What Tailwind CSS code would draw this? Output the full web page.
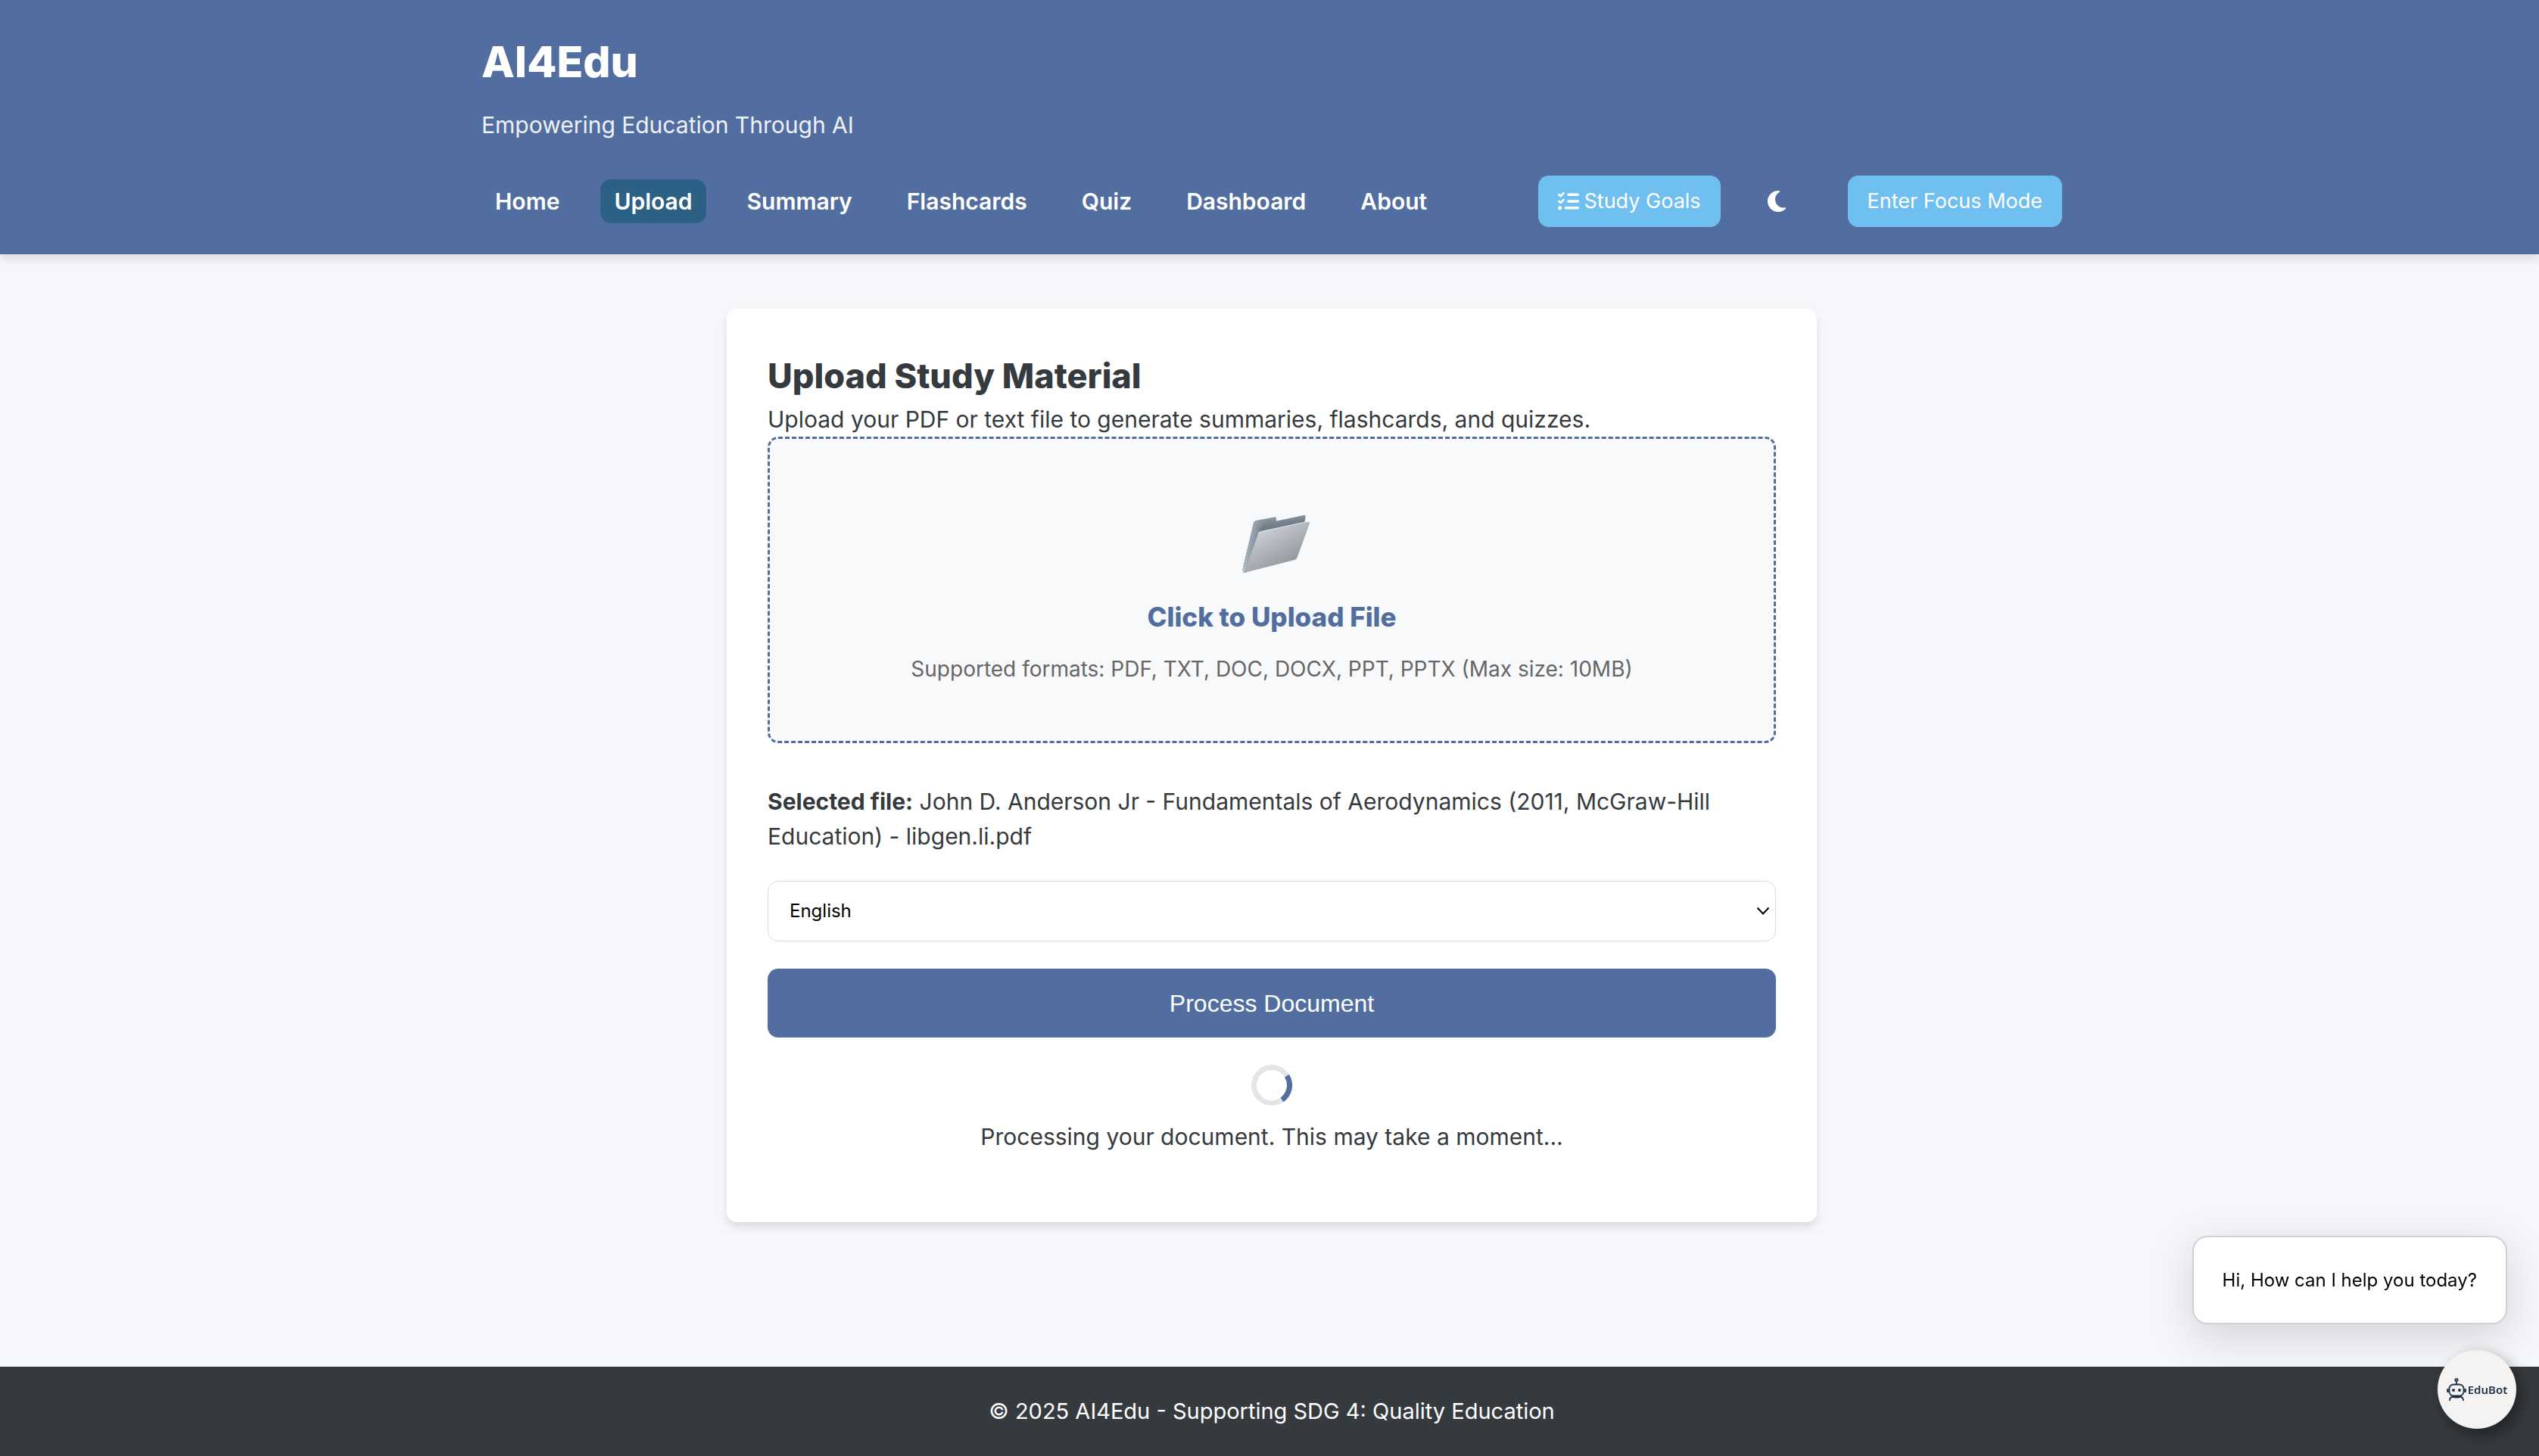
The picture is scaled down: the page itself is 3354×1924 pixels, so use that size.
<!DOCTYPE html>
<html lang="en">
<head>
<meta charset="utf-8">
<meta name="viewport" content="width=device-width, initial-scale=1">
<title>AI4Edu - Upload</title>
<script src="https://cdn.jsdelivr.net/npm/@tailwindcss/browser@4"></script>
</head>
<body class="flex min-h-screen flex-col bg-[#f5f7fb] font-['Inter',sans-serif] text-[30px] leading-[46px] text-[#353a3e]">

<header class="bg-[#526ea0] pl-1.5 text-white shadow-[0_7px_11px_rgba(0,0,0,0.1)]">
  <div class="mx-auto max-w-[2160px] p-9">
    <h1 class="text-[57px] leading-[92px] font-extrabold">AI4Edu</h1>
    <p class="mt-3.5 text-white/90">Empowering Education Through AI</p>
    <div class="mt-11 flex items-center justify-between">
      <nav aria-label="Main">
        <ul class="flex gap-9 text-[30px] font-semibold">
          <li><a href="#" class="block rounded-[14px] px-4.5 py-1.5">Home</a></li>
          <li><a href="#" aria-current="page" class="block rounded-[14px] bg-[#2d6085] px-4.5 py-1.5">Upload</a></li>
          <li><a href="#" class="block rounded-[14px] px-4.5 py-1.5">Summary</a></li>
          <li><a href="#" class="block rounded-[14px] px-4.5 py-1.5">Flashcards</a></li>
          <li><a href="#" class="block rounded-[14px] px-4.5 py-1.5">Quiz</a></li>
          <li><a href="#" class="block rounded-[14px] px-4.5 py-1.5">Dashboard</a></li>
          <li><a href="#" class="block rounded-[14px] px-4.5 py-1.5">About</a></li>
        </ul>
      </nav>
      <div class="flex items-center text-[27px] leading-[40px]">
        <button type="button" class="flex items-center gap-1.5 rounded-[14px] bg-[#70bff1] px-6.5 py-3.5">
          <svg class="h-7 w-7" viewBox="0 0 512 512" fill="currentColor" aria-hidden="true"><path d="M152.100 38.200c9.900 8.900 10.700 24 1.800 33.900l-72 80c-4.400 4.900-10.600 7.800-17.200 7.900s-12.900-2.400-17.600-7L7 113C-2.300 103.600-2.300 88.400 7 79s24.600-9.400 33.900 0l22.100 22.100 55.100-61.200c8.900-9.900 24-10.700 33.900-1.800zm0 160c9.900 8.900 10.700 24 1.800 33.900l-72 80c-4.400 4.900-10.600 7.800-17.200 7.900s-12.900-2.400-17.600-7L7 273c-9.400-9.400-9.400-24.600 0-33.900s24.600-9.400 33.900 0l22.100 22.100 55.100-61.200c8.900-9.900 24-10.700 33.900-1.800zM224 96c0-17.700 14.300-32 32-32h224c17.700 0 32 14.300 32 32s-14.300 32-32 32H256c-17.700 0-32-14.300-32-32zm0 160c0-17.700 14.300-32 32-32h224c17.700 0 32 14.300 32 32s-14.300 32-32 32H256c-17.700 0-32-14.300-32-32zm-64 160c0-17.700 14.300-32 32-32h288c17.700 0 32 14.300 32 32s-14.300 32-32 32H192c-17.700 0-32-14.300-32-32zM48 368a48 48 0 1 1 0 96 48 48 0 1 1 0-96z"/></svg>
          Study Goals
        </button>
        <button type="button" aria-label="Toggle dark mode" class="mr-14 ml-9 px-6 py-4">
          <svg class="h-8 w-7" viewBox="0 0 384 512" fill="currentColor" aria-hidden="true"><path d="M223.500 32C100 32 0 132.300 0 256S100 480 223.500 480c60.600 0 115.500-24.200 155.800-63.400 5-4.900 6.300-12.500 3.100-18.700s-10.100-9.700-17-8.500c-9.800 1.700-19.800 2.600-30.100 2.600-96.900 0-175.500-78.800-175.500-176 0-65.800 36-123.100 89.300-153.300 6.100-3.500 9.200-10.500 7.700-17.300s-7.300-11.900-14.300-12.500c-6.300-.5-12.600-.8-19-.8z"/></svg>
        </button>
        <button type="button" class="rounded-[14px] bg-[#70bff1] px-6.5 py-3.5">Enter Focus Mode</button>
      </div>
    </div>
  </div>
</header>

<main class="flex-1 py-18 pr-9 pl-10.5">
  <section class="mx-auto max-w-[1440px] rounded-[14px] bg-white px-13.5 pt-13.5 pb-22.5 shadow-[0_7px_11px_rgba(0,0,0,0.1)]">
    <h2 class="text-[45px] leading-[69px] font-extrabold">Upload Study Material</h2>
    <p>Upload your PDF or text file to generate summaries, flashcards, and quizzes.</p>

    <button type="button" class="block w-full rounded-[14px] border-3 border-dashed border-[#526ea0] bg-[#f7f9fb] py-18 text-center">
      <svg class="mx-auto h-[118px] w-[118px]" viewBox="0 0 118 118" aria-hidden="true">
        <defs>
          <linearGradient id="back" x1="0" y1="0" x2="0.15" y2="1"><stop offset="0" stop-color="#b4bec8"/><stop offset="0.2" stop-color="#78848f"/><stop offset="0.5" stop-color="#56626d"/><stop offset="0.8" stop-color="#28323c"/><stop offset="1" stop-color="#7d8b99"/></linearGradient>
          <linearGradient id="edge" x1="0" y1="0" x2="1" y2="0"><stop offset="0" stop-color="#b9c3cd"/><stop offset="0.4" stop-color="#9aa6b1" stop-opacity="0.7"/><stop offset="1" stop-color="#5b6772" stop-opacity="0"/></linearGradient>
          <linearGradient id="front" x1="0.1" y1="0.1" x2="0.75" y2="1"><stop offset="0" stop-color="#d5dbe3"/><stop offset="0.45" stop-color="#b0b6bb"/><stop offset="0.85" stop-color="#92989c"/><stop offset="1" stop-color="#a8adb0"/></linearGradient>
        </defs>
        <path d="M35 39q.5-2.500 3-3l25-4.700q2-.3 2 1.700v3.500l35.500-7.500q3.500-.7 3 2.500l-1.500 9L26 104q-5.500 2.500-5.500-3.500z" fill="url(#back)"/>
        <path d="M35 39q.5-2.500 3-3l25-4.700q2-.3 2 1.700v3.500l-20 7.500L26 101l-3 4q-3 0-2.500-4.500z" fill="url(#edge)"/>
        <path d="M41 53.500q1-2.500 3.500-3l62-13.300q3.500-.5 2.500 2.500l-16.500 45q-.8 2.300-3 3L26 104q-3.500 1-2.200-2z" fill="url(#front)"/>
        <path d="M41 53.500q1-2.500 3.500-3l62-13.300q2.500-.3 2.600 1" fill="none" stroke="#e9edf1" stroke-width="1"/>
      </svg>
      <span class="mt-4.5 block text-[35px] leading-[55px] font-extrabold text-[#526ea0]">Click to Upload File</span>
      <span class="mt-4.5 block text-[28px] text-[#666666]">Supported formats: PDF, TXT, DOC, DOCX, PPT, PPTX (Max size: 10MB)</span>
    </button>

    <p class="mt-13.5"><strong class="font-bold">Selected file:</strong> John D. Anderson Jr - Fundamentals of Aerodynamics (2011, McGraw-Hill Education) - libgen.li.pdf</p>

    <div class="relative mt-9 flex">
      <select aria-label="Language" class="h-20 w-full appearance-none rounded-[14px] border border-[#dddddd] bg-white px-7 text-[24px] leading-[36px] text-black">
        <option>English</option>
      </select>
      <svg class="pointer-events-none absolute top-8.5 right-2 h-3 w-4.5" viewBox="0 0 18 12" fill="none" stroke="#000" stroke-width="2" aria-hidden="true"><path d="M1.500 1.500 9 9.500l7.500-8"/></svg>
    </div>

    <button type="button" class="mt-9 h-[91px] w-full rounded-[14px] bg-[#526ea0] font-['Liberation_Sans',sans-serif] text-[32px] text-white">Process Document</button>

    <div role="status" class="mt-9 text-center">
      <svg class="mx-auto h-13.5 w-13.5" viewBox="0 0 54 54" fill="none" stroke-width="7" aria-hidden="true">
        <circle cx="27" cy="27" r="23.500" stroke="#e5e5e5"/>
        <path d="M47 14.700A23.500 23.500 0 0 1 40.500 46.300" stroke="#526ea0"/>
      </svg>
      <p class="mt-4.5">Processing your document. This may take a moment...</p>
    </div>
  </section>
</main>

<footer class="bg-[#353a3e] py-9 pr-9 pl-10.5 text-center text-white">
  <p class="text-[29px]">© 2025 AI4Edu - Supporting SDG 4: Quality Education</p>
</footer>

<aside aria-label="EduBot chat" class="fixed right-[30px] bottom-9 flex flex-col items-end gap-8.5">
  <div class="mr-3 rounded-[20px] border-2 border-[#cfd1d4] bg-white px-9.5 py-9 text-[24px] leading-[41px] text-black shadow-[0_16px_60px_rgba(0,0,0,0.15)]">Hi, How can I help you today?</div>
  <button type="button" aria-label="Open EduBot" class="flex h-26 w-26 items-center justify-center gap-0.5 rounded-full bg-[#f4f3f2] font-['Noto_Sans',sans-serif] text-[15px] leading-[22px] font-semibold text-[#1d3145] shadow-[6px_8px_20px_rgba(0,0,0,0.4)]">
    <svg class="h-8 w-6.5 shrink-0" viewBox="0 0 26 32" fill="none" stroke="currentColor" stroke-width="1.800" aria-hidden="true">
      <circle cx="13" cy="3.500" r="1.700"/><path d="M13 5.500V9M4 31q0-5 4-5h10q4 0 4 5M10 26.500h6"/><rect x="3.500" y="9.500" width="19" height="15" rx="5.500"/><path d="M1.500 15v5M24.500 15v5" stroke-width="2.500"/><circle cx="9" cy="17" r="2" fill="currentColor" stroke="none"/><circle cx="17" cy="17" r="2" fill="currentColor" stroke="none"/>
    </svg>
    EduBot
  </button>
</aside>

</body>
</html>
